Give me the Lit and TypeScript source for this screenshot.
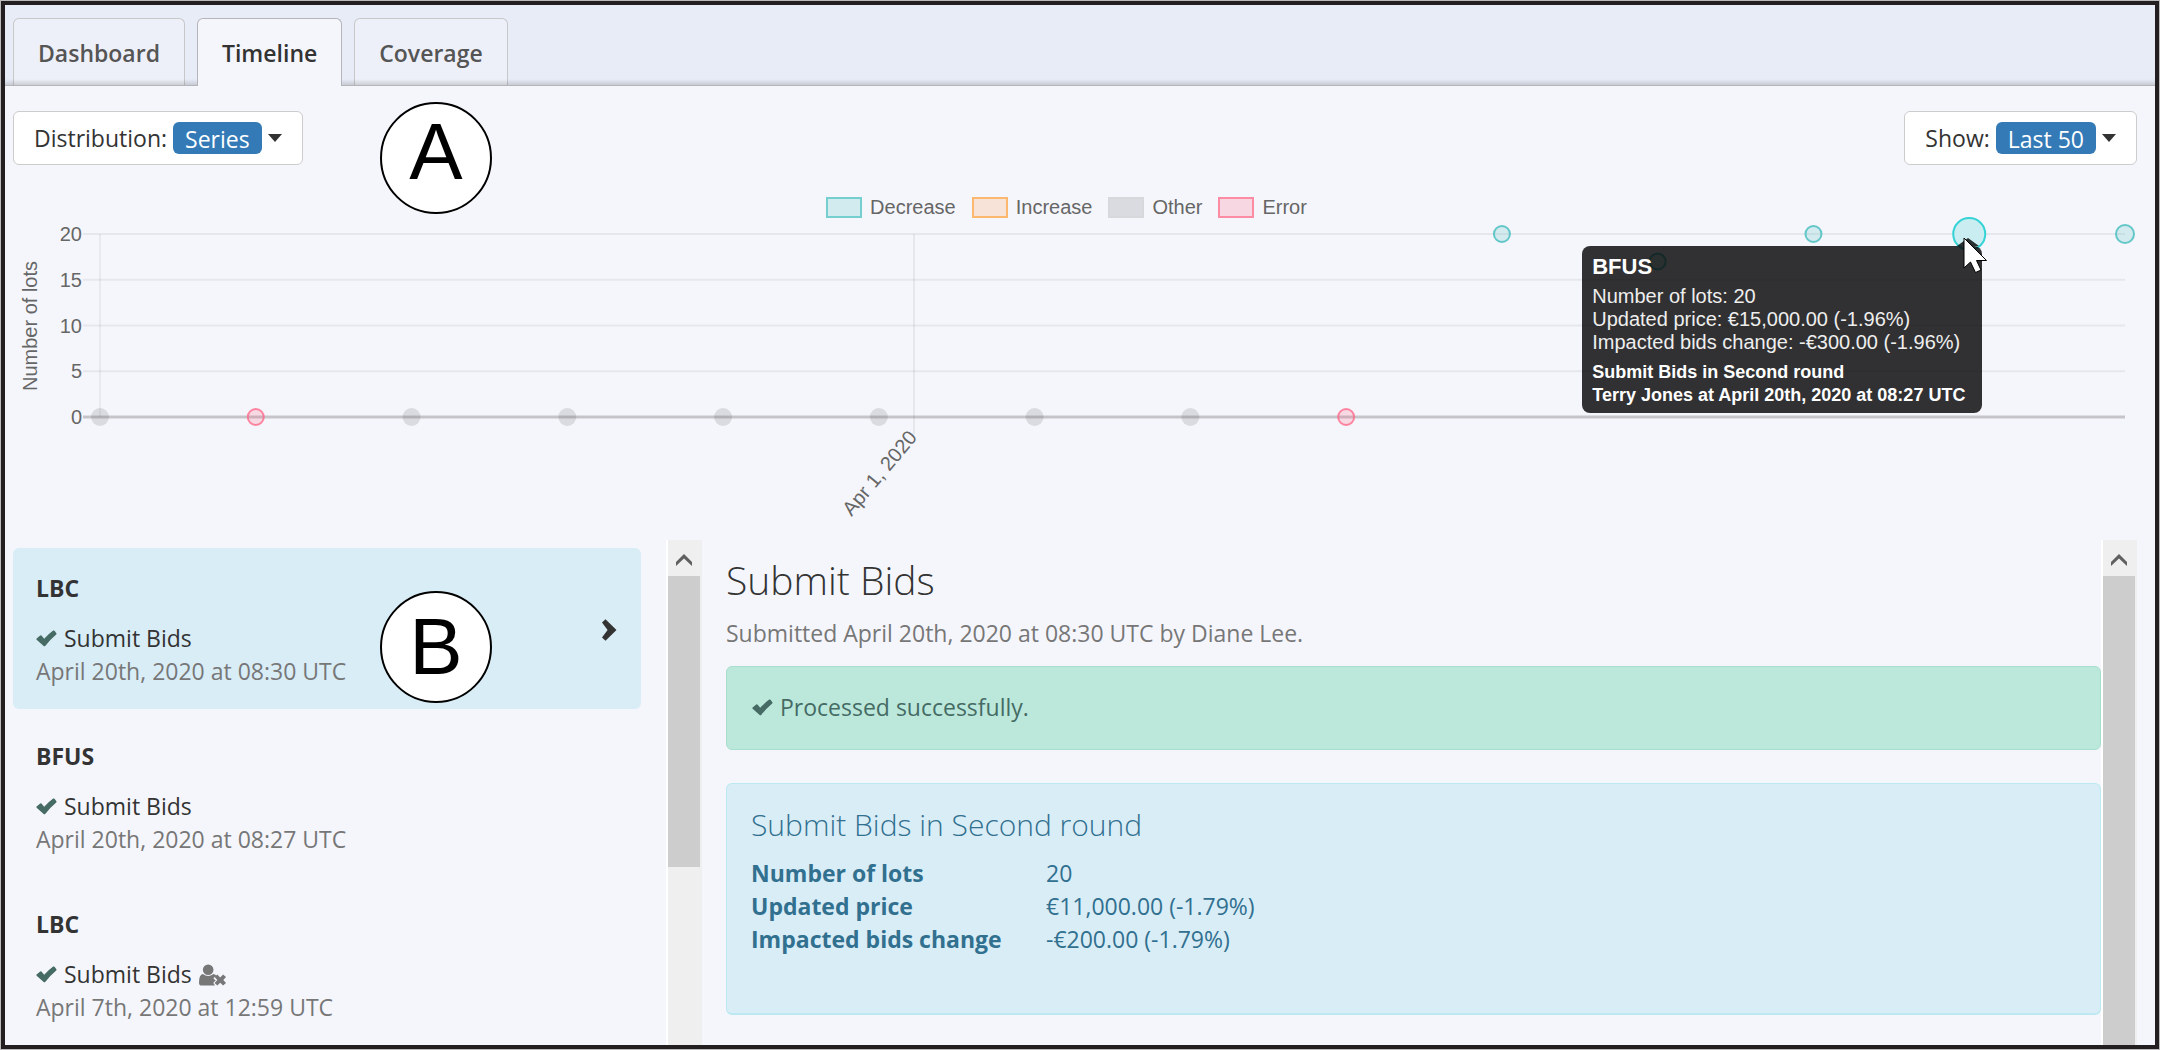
import { LitElement, html, css, svg } from "lit";
import { customElement, property, state } from "lit/decorators.js";
import { classMap } from "lit/directives/class-map.js";

interface Bid {
  series: string;
  when: string;
  proxy?: boolean;
}

interface Point {
  slot: number;
  lots: number;
  kind: "decrease" | "other" | "error";
  radius: number;
  active?: boolean;
}

const SLOTS = 13;
const PLOT_HEIGHT = 183;
const MAX_LOTS = 20;

const BIDS: Bid[] = [
  { series: "LBC", when: "April 20th, 2020 at 08:30 UTC" },
  { series: "BFUS", when: "April 20th, 2020 at 08:27 UTC" },
  { series: "LBC", when: "April 7th, 2020 at 12:59 UTC", proxy: true },
];

const POINTS: Point[] = [
  { slot: 0, lots: 0, kind: "other", radius: 9 },
  { slot: 1, lots: 0, kind: "error", radius: 8 },
  { slot: 2, lots: 0, kind: "other", radius: 9 },
  { slot: 3, lots: 0, kind: "other", radius: 9 },
  { slot: 4, lots: 0, kind: "other", radius: 9 },
  { slot: 5, lots: 0, kind: "other", radius: 9 },
  { slot: 6, lots: 0, kind: "other", radius: 9 },
  { slot: 7, lots: 0, kind: "other", radius: 9 },
  { slot: 8, lots: 0, kind: "error", radius: 8 },
  { slot: 9, lots: 20, kind: "decrease", radius: 8 },
  { slot: 10, lots: 17, kind: "decrease", radius: 8 },
  { slot: 11, lots: 20, kind: "decrease", radius: 8 },
  { slot: 12, lots: 20, kind: "decrease", radius: 16, active: true },
  { slot: 13, lots: 20, kind: "decrease", radius: 9 },
];

const LEGEND = [
  { kind: "decrease", label: "Decrease" },
  { kind: "increase", label: "Increase" },
  { kind: "other", label: "Other" },
  { kind: "error", label: "Error" },
];

const TICKS = [20, 15, 10, 5, 0];

const checkIcon = html`<svg class="check" viewBox="0 0 21 17" aria-hidden="true">
  <path d="M0.6 8.6 L4.2 5.4 Q4.8 5 5.4 5.6 L8.2 8.8 Q13 3.6 17.2 0.6 Q18 0.2 18.5 0.8 L20.4 3.2 Q20.8 3.9 20.2 4.4 Q14 9.6 9.4 15.8 Q8.4 16.8 7.4 15.8 L0.6 9.8 Q0.1 9.2 0.6 8.6Z"/>
</svg>`;

const userTimesIcon = html`<svg class="user" viewBox="0 0 28 22" aria-hidden="true">
  <circle cx="9.5" cy="5.5" r="5.5"/>
  <path d="M4 10 Q9.500 14 15 10 Q17.500 10.600 18 12 L15.200 13.800 V15 L17.400 16.600 L15.200 18.600 V20 L16.600 21.600 Q16 22 15 22 H3 Q0 22 0 19 Q0 10.600 4 10Z"/>
  <path d="M19 10.500 L22 13.500 L25 10.500 L28 13.200 L25.200 16.200 L28 19.200 L25 22 L22 19 L19 22 L16.200 19.200 L19 16.200 L16.200 13.200Z"/>
</svg>`;

const upArrow = html`<svg class="up" viewBox="0 0 16 12" aria-hidden="true">
  <path d="M0 8 L8 0 L16 8 V12 L8 4.500 L0 12Z"/>
</svg>`;

@customElement("timeline-chart")
export class TimelineChart extends LitElement {
  static styles = css`
    :host {
      display: grid;
      grid-template-columns: 33px 54px 1fr;
      padding: 26px 30px 0 8px;
      font-family: "Liberation Sans", Arial, sans-serif;
      font-size: 20px;
      line-height: 24px;
      color: #666;
    }
    .legend {
      grid-column: 1 / -1;
      display: flex;
      justify-content: center;
      gap: 16px;
      height: 32px;
      margin: 0 0 11px;
      padding: 0 5px 0 0;
      align-items: center;
      list-style: none;
    }
    .entry {
      display: flex;
      align-items: center;
      gap: 8px;
    }
    .swatch {
      box-sizing: border-box;
      width: 36px;
      height: 21px;
      border: 2px solid;
    }
    .decrease { border-color: #75cfcf; background: #d1ebee; }
    .increase { border-color: #fdb870; background: #f7e3d7; }
    .other { border-color: #d7d8dc; background: #dadbe0; }
    .error { border-color: #fc8ba4; background: #f7d8e2; }
    .title {
      writing-mode: vertical-rl;
      transform: rotate(180deg);
      text-align: center;
      justify-self: center;
    }
    .ticks {
      display: flex;
      flex-direction: column;
      justify-content: space-between;
      margin: -12px 18px -12px 0;
      text-align: right;
    }
    .plot {
      position: relative;
      height: 183px;
      margin-bottom: 123px;
    }
    svg.canvas {
      display: block;
      width: 100%;
      height: 100%;
      overflow: visible;
    }
    .grid { stroke: rgba(0, 0, 0, 0.06); stroke-width: 2; }
    .axis { stroke: rgba(0, 0, 0, 0.1); stroke-width: 1; }
    .zero { stroke: rgba(0, 0, 0, 0.2); stroke-width: 3; }
    .date { fill: #666; text-anchor: end; }
    .p-decrease { fill: rgba(75, 192, 192, 0.2); stroke: rgba(75, 192, 192, 0.85); stroke-width: 2; }
    .p-error { fill: rgba(255, 99, 132, 0.2); stroke: rgba(255, 99, 132, 0.75); stroke-width: 2; }
    .p-other { fill: rgba(100, 100, 100, 0.18); }
    .p-active { fill: #c9edf1; stroke: #36d3d6; stroke-width: 2; }
    .tooltip {
      position: absolute;
      top: 12px;
      right: calc(100% / 13 - 13px);
      box-sizing: border-box;
      min-width: 400px;
      padding: 9px 10px 6px;
      border-radius: 8px;
      background: rgba(0, 0, 0, 0.8);
      color: #fff;
      white-space: nowrap;
    }
    .tooltip::before {
      content: "";
      position: absolute;
      right: 3px;
      top: -8px;
      border: solid transparent;
      border-width: 0 11px 8px;
      border-bottom-color: rgba(0, 0, 0, 0.8);
    }
    .name {
      margin: 0 0 6px;
      font-size: 22px;
      line-height: 24px;
      font-weight: 700;
    }
    .row { margin: 0; line-height: 23px; color: #eee; }
    .foot {
      margin: 7px 0 0;
      font-size: 18px;
      line-height: 23px;
      font-weight: 700;
    }
    .pointer {
      position: absolute;
      left: calc(100% * 12 / 13 - 6px);
      top: 3px;
      width: 26px;
      height: 38px;
    }
  `;

  render() {
    const x = (slot: number) => `${(slot / SLOTS) * 100}%`;
    const y = (lots: number) => PLOT_HEIGHT * (1 - lots / MAX_LOTS);
    const april = `${(814 / 2025) * 100}%`;
    return html`
      <ul class="legend">
        ${LEGEND.map((l) => html`<li class="entry"><span class="swatch ${l.kind}"></span>${l.label}</li>`)}
      </ul>
      <div class="title" style="height:${PLOT_HEIGHT}px">Number of lots</div>
      <div class="ticks" style="height:${PLOT_HEIGHT + 24}px">
        ${TICKS.map((t) => html`<span>${t}</span>`)}
      </div>
      <div class="plot">
        <svg class="canvas" role="img" aria-label="Number of lots over time">
          ${TICKS.map((t) => svg`<line class=${t ? "grid" : "zero"} x1="-17" x2="100%" y1=${y(t)} y2=${y(t)} />`)}
          <line class="axis" x1="0" x2="0" y1="0" y2=${PLOT_HEIGHT} />
          <line class="grid" x1=${april} x2=${april} y1="0" y2="200" />
          <svg x=${april} y="207" overflow="visible">
            <text class="date" transform="rotate(-50)" x="5" y="1">Apr 1, 2020</text>
          </svg>
          ${POINTS.map(
            (p) => svg`<circle class=${p.active ? "p-active" : `p-${p.kind}`} cx=${x(p.slot)} cy=${y(p.lots)} r=${p.radius} />`,
          )}
        </svg>
        <div class="tooltip" role="tooltip">
          <p class="name">BFUS</p>
          <p class="row">Number of lots: 20</p>
          <p class="row">Updated price: €15,000.00 (-1.96%)</p>
          <p class="row">Impacted bids change: -€300.00 (-1.96%)</p>
          <p class="foot">Submit Bids in Second round<br />Terry Jones at April 20th, 2020 at 08:27 UTC</p>
        </div>
        <svg class="pointer" viewBox="0 0 26 38" aria-hidden="true">
          <path d="M1 1 V31 L7.500 25 L12.500 35.500 L18 33 L13.500 23.500 H23.500Z" fill="#fff" stroke="#000" stroke-width="1" />
        </svg>
      </div>
    `;
  }
}

@customElement("scroll-rail")
export class ScrollRail extends LitElement {
  @property({ type: Number }) size = 100;

  static styles = css`
    :host {
      display: flex;
      flex-direction: column;
      flex: none;
      box-sizing: border-box;
      width: 36px;
      border-left: 2px solid #fff;
      padding-right: 2px;
      background: #efefef;
    }
    .cap {
      display: flex;
      flex: none;
      align-items: center;
      justify-content: center;
      height: 36px;
      padding: 4px 0 0;
      box-sizing: border-box;
    }
    .up { width: 16px; height: 12px; fill: #606060; }
    .track { flex: 1; }
    .thumb { background: #cdcdcd; }
  `;

  render() {
    return html`
      <div class="cap">${upArrow}</div>
      <div class="track"><div class="thumb" style="height:${this.size}%"></div></div>
    `;
  }
}

@customElement("app-root")
export class AppRoot extends LitElement {
  @state() private selected = 0;
  @state() private tab = "Timeline";

  static styles = css`
    :host {
      display: block;
      box-sizing: border-box;
      height: 100vh;
      padding: 1px;
      background: #bbb;
      font-family: "Open Sans", "Noto Sans", sans-serif;
      font-size: 23px;
      line-height: 33px;
      color: #333;
    }
    button { font: inherit; color: inherit; cursor: pointer; }
    .frame {
      position: relative;
      display: flex;
      flex-direction: column;
      box-sizing: border-box;
      height: 100%;
      border: 4px solid #231f20;
      background: #f5f6fc;
      overflow: hidden;
    }
    .tabs {
      position: relative;
      display: flex;
      gap: 12px;
      padding: 13px 8px 0;
      background: #e8ecf7;
      border-bottom: 1px solid #b4b5b9;
    }
    .tabs::after {
      content: "";
      position: absolute;
      inset: auto 0 0;
      height: 6px;
      background: linear-gradient(rgba(0, 0, 0, 0), rgba(0, 0, 0, 0.14));
    }
    .tab {
      height: 67px;
      padding: 2px 24px 0;
      border: 1px solid #c8c8ca;
      border-bottom: 0;
      border-radius: 6px 6px 0 0;
      background: #eef0f9;
      color: #555;
      font-weight: 600;
    }
    .tab.current {
      position: relative;
      z-index: 1;
      height: 68px;
      margin-bottom: -1px;
      background: #f5f6fc;
      border-color: #b4b5b9;
      color: #333;
    }
    .toolbar {
      display: flex;
      justify-content: space-between;
      padding: 25px 18px 0 8px;
    }
    .picker {
      display: flex;
      align-items: center;
      gap: 6px;
      height: 54px;
      padding: 0 20px;
      border: 1px solid #ccc;
      border-radius: 6px;
      background: #fff;
    }
    .value {
      padding: 0 12px;
      height: 32px;
      line-height: 34px;
      border-radius: 6px;
      background: #337ab7;
      color: #fff;
    }
    .caret {
      border: solid transparent;
      border-width: 8px 7px 0;
      border-top-color: #333;
    }
    .panes {
      flex: 1;
      min-height: 0;
      display: grid;
      grid-template-columns: 689fr 1411fr;
      gap: 24px;
      padding: 0 18px 0 8px;
    }
    .pane {
      display: flex;
      min-width: 0;
      min-height: 0;
    }
    .scroll {
      flex: 1;
      min-width: 0;
      overflow: hidden;
    }
    .list {
      display: flex;
      flex-direction: column;
      gap: 7px;
      padding: 8px 25px 0 0;
    }
    .item {
      display: flex;
      flex: none;
      align-items: center;
      justify-content: space-between;
      padding: 24px 24px 21px 23px;
      border: 0;
      border-radius: 6px;
      background: none;
      text-align: left;
    }
    .item.selected { background: #d9edf7; }
    .lines { display: flex; flex-direction: column; }
    .series { font-weight: 700; margin-bottom: 17px; }
    .action { display: flex; align-items: center; gap: 7px; }
    .when, .meta { color: #777; }
    .check { width: 21px; height: 17px; fill: #456b64; flex: none; }
    .user { width: 27px; height: 22px; fill: #777; }
    .chevron { width: 16px; height: 22px; fill: #333; }
    .detail { padding: 18px 0 0; }
    .heading {
      margin: 0 0 15px;
      font-size: 39px;
      line-height: 44px;
      font-weight: 300;
    }
    .meta { margin: 0 0 16px; }
    .notice {
      display: flex;
      align-items: center;
      gap: 7px;
      margin: 0 0 33px;
      padding: 24px 25px 25px;
      border: 1px solid #a8dfcb;
      border-radius: 6px;
      background: #bce8dc;
      color: #456b64;
    }
    .panel {
      padding: 24px 24px 57px;
      border: 1px solid #bce8f1;
      border-bottom-width: 2px;
      border-radius: 6px;
      background: #d9edf7;
      color: #31708f;
    }
    .subheading {
      margin: 0 0 16px;
      font-size: 30px;
      line-height: 33px;
      font-weight: 300;
    }
    .facts {
      display: grid;
      grid-template-columns: 295px 1fr;
      margin: 0;
    }
    .facts dt { font-weight: 700; }
    .facts dd { margin: 0; }
    .callout {
      position: absolute;
      left: 375px;
      display: flex;
      align-items: center;
      justify-content: center;
      box-sizing: border-box;
      width: 112px;
      height: 112px;
      border: 2px solid #000;
      border-radius: 50%;
      background: #fff;
      color: #000;
      font-family: "Liberation Sans", Arial, sans-serif;
      font-size: 80px;
      line-height: 80px;
      pointer-events: none;
    }
    .callout.a { top: 97px; padding-bottom: 12px; }
    .callout.b { top: 586px; }
  `;

  render() {
    return html`
      <div class="frame">
        <nav class="tabs" role="tablist">
          ${["Dashboard", "Timeline", "Coverage"].map(
            (t) => html`<button
              role="tab"
              aria-selected=${t === this.tab}
              class=${classMap({ tab: true, current: t === this.tab })}
              @click=${() => (this.tab = t)}
            >${t}</button>`,
          )}
        </nav>
        <div class="toolbar">
          <button class="picker" aria-haspopup="listbox">
            <span>Distribution:</span><span class="value">Series</span><span class="caret"></span>
          </button>
          <button class="picker" aria-haspopup="listbox">
            <span>Show:</span><span class="value">Last 50</span><span class="caret"></span>
          </button>
        </div>
        <timeline-chart></timeline-chart>
        <main class="panes">
          <section class="pane">
            <div class="scroll list">
              ${BIDS.map(
                (b, i) => html`<button
                  class=${classMap({ item: true, selected: i === this.selected })}
                  @click=${() => (this.selected = i)}
                >
                  <span class="lines">
                    <span class="series">${b.series}</span>
                    <span class="action">${checkIcon}<span>Submit Bids</span>${b.proxy ? userTimesIcon : ""}</span>
                    <span class="when">${b.when}</span>
                  </span>
                  ${i === this.selected
                    ? html`<svg class="chevron" viewBox="0 0 16 22" aria-hidden="true">
                        <path d="M1 3.500 L4.500 0.300 L15.500 11 L4.500 21.700 L1 18.500 L6.600 11Z" />
                      </svg>`
                    : ""}
                </button>`,
              )}
            </div>
            <scroll-rail .size=${62}></scroll-rail>
          </section>
          <section class="pane">
            <div class="scroll detail">
              <h1 class="heading">Submit Bids</h1>
              <p class="meta">Submitted April 20th, 2020 at 08:30 UTC by Diane Lee.</p>
              <div class="notice" role="status">${checkIcon}<span>Processed successfully.</span></div>
              <div class="panel">
                <h2 class="subheading">Submit Bids in Second round</h2>
                <dl class="facts">
                  <dt>Number of lots</dt><dd>20</dd>
                  <dt>Updated price</dt><dd>€11,000.00 (-1.79%)</dd>
                  <dt>Impacted bids change</dt><dd>-€200.00 (-1.79%)</dd>
                </dl>
              </div>
            </div>
            <scroll-rail .size=${100}></scroll-rail>
          </section>
        </main>
        <span class="callout a">A</span>
        <span class="callout b">B</span>
      </div>
    `;
  }
}
